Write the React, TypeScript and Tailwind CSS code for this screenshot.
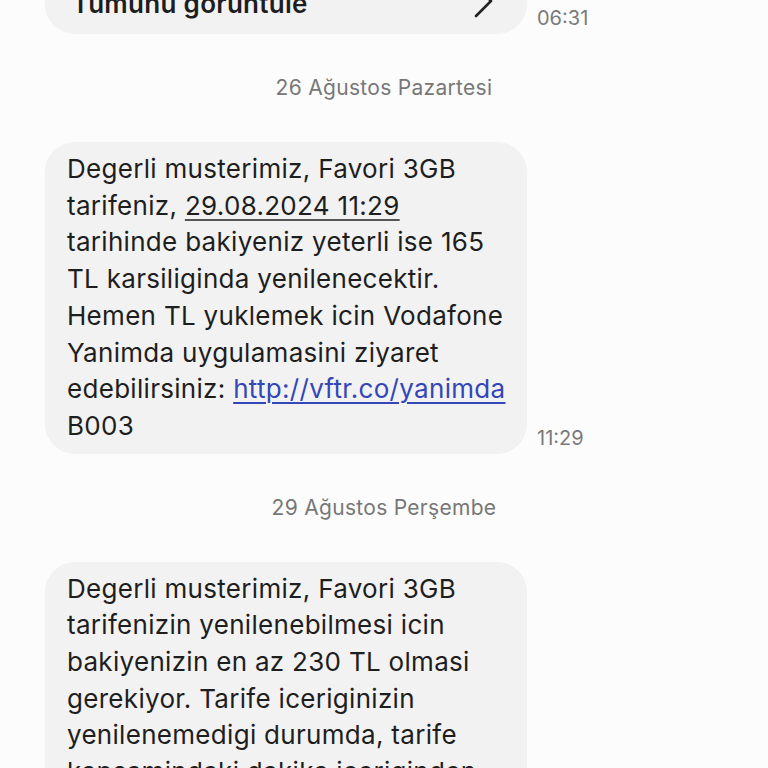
const font = { fontFamily: "Inter, 'Noto Sans', sans-serif" };

function Time({ value }: { value: string }) {
  return (
    <span className="ml-[10px] mb-[4px] text-[20px] leading-[24px] text-[#7a7a7a]">
      {value}
    </span>
  );
}

function DateLabel({ children }: { children: React.ReactNode }) {
  return (
    <div className="flex justify-center py-[40px] text-[21px] leading-[28px] tracking-[0.3px] text-[#777777]">
      {children}
    </div>
  );
}

function Bubble({
  children,
  time,
}: {
  children: React.ReactNode;
  time?: string;
}) {
  return (
    <div className="flex items-end pl-[45px]">
      <div className="w-[482px] shrink-0 whitespace-nowrap rounded-[30px] bg-[#f2f2f2] py-[9px] pl-[22px] pr-[16px] text-[26px] leading-[36.7px] tracking-[0.3px] text-[#1e1e1e]">
        {children}
      </div>
      {time && <Time value={time} />}
    </div>
  );
}

export default function App() {
  return (
    <div
      className="h-[768px] w-[768px] overflow-hidden bg-[#fcfcfc]"
      style={font}
    >
      <div className="flex items-end pl-[45px] -mt-[40px]">
        <div className="flex h-[74px] w-[482px] items-center justify-between rounded-b-[30px] bg-[#f2f2f2] pl-[27px] pr-[32px]">
          <span className="pt-[12px] text-[26px] font-semibold tracking-[0.3px] text-[#1e1e1e]">
            Tümünü görüntüle
          </span>
          <svg width="22" height="34" viewBox="0 0 22 34" className="mt-[8px]">
            <path
              d="M3 2 L18 17 L3 32"
              fill="none"
              stroke="#222"
              strokeWidth="2.6"
              strokeLinecap="round"
              strokeLinejoin="round"
            />
          </svg>
        </div>
        <Time value="06:31" />
      </div>

      <DateLabel>26 Ağustos Pazartesi</DateLabel>

      <Bubble time="11:29">
        Degerli musterimiz, Favori 3GB
        <br />
        tarifeniz,{" "}
        <span className="underline decoration-[#555] decoration-[1.5px] underline-offset-[4px]">
          29.08.2024 11:29
        </span>
        <br />
        tarihinde bakiyeniz yeterli ise 165
        <br />
        TL karsiliginda yenilenecektir.
        <br />
        Hemen TL yuklemek icin Vodafone
        <br />
        Yanimda uygulamasini ziyaret
        <br />
        edebilirsiniz:{" "}
        <span className="text-[#3446b8] underline decoration-[1.5px] underline-offset-[4px]">
          http://vftr.co/yanimda
        </span>
        <br />
        B003
      </Bubble>

      <DateLabel>29 Ağustos Perşembe</DateLabel>

      <Bubble>
        Degerli musterimiz, Favori 3GB
        <br />
        tarifenizin yenilenebilmesi icin
        <br />
        bakiyenizin en az 230 TL olmasi
        <br />
        gerekiyor. Tarife iceriginizin
        <br />
        yenilenemedigi durumda, tarife
        <br />
        kapsamindaki dakika iceriginden
        <br />
        kullanmaya devam edebilirsiniz.
      </Bubble>
    </div>
  );
}
